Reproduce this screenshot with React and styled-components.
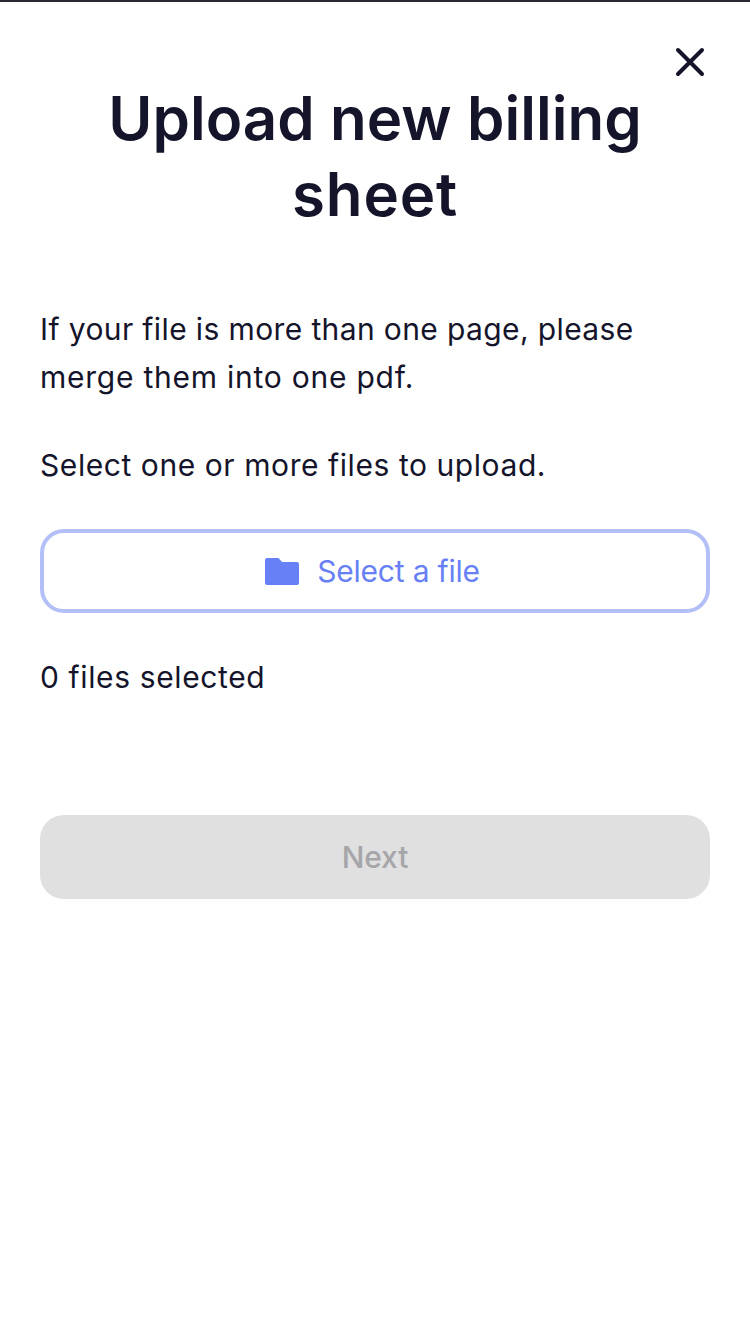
import React from "react";
import styled, { createGlobalStyle } from "styled-components";

const Global = createGlobalStyle`
  html, body { margin: 0; padding: 0; background: #fff; }
  * { box-sizing: border-box; }
`;

const Page = styled.div`
  width: 750px;
  height: 1332px;
  overflow: hidden;
  background: #fff;
  border-top: 2px solid #2a2a33;
  padding: 0 40px;
  position: relative;
  font-family: Inter, "Noto Sans", sans-serif;
  color: #14142b;
`;

const Close = styled.button`
  position: absolute;
  top: 44px;
  right: 40px;
  width: 40px;
  height: 32px;
  padding: 0;
  border: 0;
  background: none;
  display: flex;
  align-items: center;
  justify-content: center;
  color: #14142b;
`;

const Title = styled.h1`
  margin: 78px 0 0;
  font-size: 60px;
  line-height: 76px;
  font-weight: 600;
  letter-spacing: 0.05px;
  text-align: center;
`;

const TitleEnd = styled.span`
  letter-spacing: 0.8px;
`;

const Body = styled.p`
  margin: ${(p) => p.$top}px 0 0;
  font-size: 30px;
  line-height: 48px;
  letter-spacing: ${(p) => p.$spacing}px;
`;

const BodyEnd = styled.span`
  letter-spacing: 0.76px;
`;

const SelectButton = styled.button`
  margin-top: 40px;
  width: 100%;
  height: 84px;
  display: flex;
  align-items: center;
  justify-content: center;
  gap: 18px;
  padding: 0 5px 0 0;
  background: #fff;
  border: 4px solid #b3bff7;
  border-radius: 24px;
  color: #6880f6;
  font: 400 30px Inter, sans-serif;
  letter-spacing: -0.2px;
`;

const Next = styled.button`
  margin-top: 114px;
  width: 100%;
  height: 84px;
  border: 0;
  border-radius: 24px;
  background: #e0e0e0;
  color: #a6a6aa;
  font: 500 30px Inter, sans-serif;
  letter-spacing: -0.1px;
`;

export default function App() {
  return (
    <Page>
      <Global />
      <Close aria-label="Close">
        <svg width="30" height="30" viewBox="0 0 30 30" fill="none" stroke="currentColor" strokeWidth="4" strokeLinecap="round">
          <path d="M3 3 L27 27 M27 3 L3 27" />
        </svg>
      </Close>
      <Title>Upload new billing <TitleEnd>sheet</TitleEnd></Title>
      <Body $top={73} $spacing={0.38}>If your file is more than one page, please <BodyEnd>merge them into one pdf.</BodyEnd></Body>
      <Body $top={40} $spacing={0.57}>Select one or more files to upload.</Body>
      <SelectButton>
        <svg width="34" height="27" viewBox="0 0 34 27" fill="currentColor">
          <path d="M2 0h11.5l3.5 4h15a2 2 0 0 1 2 2v19a2 2 0 0 1-2 2H2a2 2 0 0 1-2-2V2a2 2 0 0 1 2-2z" />
        </svg>
        Select a file
      </SelectButton>
      <Body $top={40} $spacing={0.62}>0 files selected</Body>
      <Next>Next</Next>
    </Page>
  );
}
